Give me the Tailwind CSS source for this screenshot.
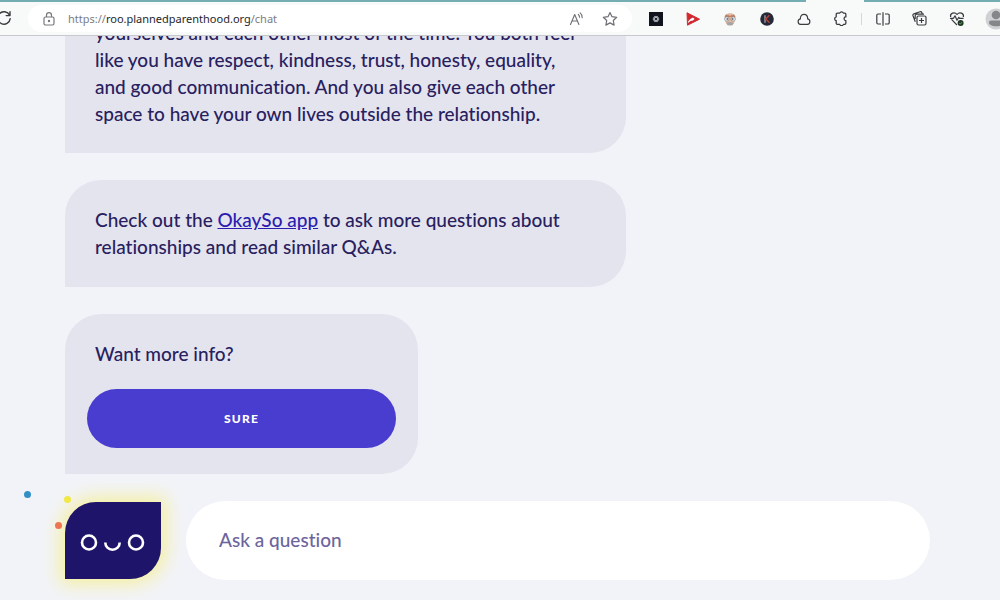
<!DOCTYPE html>
<html lang="en">
<head>
  <meta charset="UTF-8">
  <meta name="viewport" content="width=device-width, initial-scale=1">
  <title>Roo</title>
  <script src="https://cdn.jsdelivr.net/npm/@tailwindcss/browser@4"></script>
</head>
<body class="h-screen flex flex-col overflow-hidden bg-[#f2f3f8] text-[#28205f] font-['Lato',sans-serif] [font-variant-ligatures:none]">

  <!-- Browser toolbar -->
  <header class="relative z-10 h-9 shrink-0 flex items-center bg-[#f7faf9] border-b border-[#c6c8cb] text-[#3b3c40]">
    <div class="absolute inset-x-0 top-0 flex h-[2px]">
      <span class="flex-1 bg-[#74aeb3]"></span>
      <span class="w-[58px]"></span>
      <span class="w-[136px] bg-[#74aeb3]"></span>
    </div>
    <button type="button" aria-label="Refresh" class="-ml-1 w-4 shrink-0">
      <svg class="size-4" viewBox="0 0 16 16" fill="none" stroke="currentColor" stroke-width="1.4" stroke-linecap="round" stroke-linejoin="round">
        <path d="M13.6 5.2A6.2 6.2 0 1 0 14.200 8.600M14 1.800V5.600H10.200"/>
      </svg>
    </button>
    <div class="ml-4 mr-[5px] mt-[2px] flex-1 min-w-0 h-[27px] flex items-center rounded-full bg-white pl-[14px] pr-[14px]">
      <svg class="size-[14px] shrink-0 text-[#77787f]" viewBox="0 0 14 14" fill="none" stroke="currentColor" stroke-width="1.2">
        <rect x="2" y="5" width="10" height="8" rx="1.500"/>
        <path d="M4.500 5V3.200a2.500 2.500 0 0 1 5 0V5"/>
        <circle cx="7" cy="9" r=".6" fill="currentColor"/>
      </svg>
      <div role="textbox" contenteditable="true" aria-label="Address" class="ml-3 flex-1 min-w-0 whitespace-nowrap overflow-hidden text-[11px] leading-4 font-['Noto_Sans',sans-serif] text-[#7b7c82] outline-none">https://<span class="text-[#25262b]">roo.plannedparenthood.org</span>/chat</div>
      <button type="button" aria-label="Read aloud" class="text-[#6d6e74]">
        <svg class="size-4" viewBox="0 0 16 16" fill="none" stroke="currentColor" stroke-width="1.1" stroke-linecap="round" stroke-linejoin="round">
          <path d="M1.500 13.500 5.700 3.500 9.900 13.500M3 10h5.400M9.300 3.300q1.300 1.200 1.200 3M11.200 1.800q2.300 2 2 5"/>
        </svg>
      </button>
      <button type="button" aria-label="Add to favorites" class="ml-[17px] text-[#6d6e74]">
        <svg class="size-4" viewBox="0 0 16 16" fill="none" stroke="currentColor" stroke-width="1.2" stroke-linejoin="round">
          <path d="m8 1.500 2 4.200 4.700.6-3.400 3.200.8 4.600L8 11.900l-4.100 2.200.8-4.600L1.300 6.300 6 5.700z"/>
        </svg>
      </button>
    </div>

    <nav aria-label="Extensions" class="mt-[2px] flex shrink-0 items-center">
      <button type="button" aria-label="ChatGPT extension" class="w-[37px] flex justify-center">
        <svg class="size-[14px]" viewBox="0 0 14 14">
          <rect width="14" height="14" fill="#11131d"/>
          <g fill="none" stroke="#b9bbc2" stroke-width=".8">
            <ellipse cx="7" cy="7" rx="3" ry="1.500"/>
            <ellipse cx="7" cy="7" rx="3" ry="1.500" transform="rotate(60 7 7)"/>
            <ellipse cx="7" cy="7" rx="3" ry="1.500" transform="rotate(120 7 7)"/>
          </g>
        </svg>
      </button>
      <button type="button" aria-label="Video extension" class="w-[37px] flex justify-center">
        <svg class="size-[14px]" viewBox="0 0 14 14">
          <path d="M1 .8 13.500 7.200 1.500 13.200z" fill="#cf2a30" stroke="#cf2a30" stroke-linejoin="round"/>
          <path d="M1.600 11.300Q2.800 7 7 5.600L8.600 7Q7 9 4.500 8.900z" fill="#fff"/>
        </svg>
      </button>
      <button type="button" aria-label="Avatar extension" class="w-[37px] flex justify-center">
        <svg class="size-[14px]" viewBox="0 0 14 14">
          <path d="M1.500 5.500C1.500 0 12.500 0 12.500 5.500z" fill="#bf7f60"/>
          <path d="M2.500 5h9v4.500a4.500 4 0 0 1-9 0z" fill="#dfb69e"/>
          <path d="M4 2.700h6M7 1v3" stroke="#ead4c5" stroke-width=".8"/>
          <circle cx="3.800" cy="7" r="2.200" fill="#e5edf3" stroke="#8c8487" stroke-width=".7"/>
          <circle cx="10.200" cy="7" r="2.200" fill="#e5edf3" stroke="#8c8487" stroke-width=".7"/>
          <circle cx="4.300" cy="7" r=".8" fill="#34343e"/>
          <circle cx="9.700" cy="7" r=".8" fill="#34343e"/>
          <path d="M3.500 11q3.500-2 7 0l-1 2.300h-5z" fill="#a6a5a4"/>
        </svg>
      </button>
      <button type="button" aria-label="K extension" class="w-[37px] flex justify-center">
        <svg class="size-[14px]" viewBox="0 0 14 14">
          <circle cx="7" cy="7" r="6.800" fill="#242a38"/>
          <path d="M5 3.300v7.400" stroke="#a7a4a6" stroke-width="1.300"/>
          <path d="M9.400 3.300 5.700 7l3.900 3.700" fill="none" stroke="#bd3e38" stroke-width="1.400"/>
        </svg>
      </button>
      <button type="button" aria-label="Cloud extension" class="w-[37px] flex justify-center">
        <svg class="size-[14px]" viewBox="0 0 14 14" fill="none" stroke="currentColor" stroke-width="1.200">
          <path d="M3.500 12.400A2.800 2.800 0 0 1 3.300 6.900C3.300.8 10.700.8 10.700 6.900a2.800 2.800 0 0 1-.2 5.500z"/>
        </svg>
      </button>
      <button type="button" aria-label="Extensions" class="w-[37px] flex justify-center">
        <svg class="size-[15px]" viewBox="0 0 14 14" fill="none" stroke="currentColor" stroke-width="1.200" stroke-linejoin="round">
          <path d="M4 2h2.300a1.800 1.800 0 0 1 3.400 0H11a1 1 0 0 1 1 1v2.500a1.700 1.700 0 0 0 0 3.400v2.600a1 1 0 0 1-1 1H9.700a1.800 1.800 0 0 1-3.400 0H4a1 1 0 0 1-1-1V9.100a1.900 1.900 0 0 1 0-3.700V3a1 1 0 0 1 1-1z"/>
        </svg>
      </button>
      <span class="mx-[2px] h-3 w-px bg-[#d5d7da]"></span>
      <button type="button" aria-label="Split screen" class="w-[37px] flex justify-center">
        <svg class="size-[14px]" viewBox="0 0 14 14" fill="none" stroke="currentColor" stroke-width="1.200">
          <path d="M5 2H2A1.200 1.200 0 0 0 .8 3.200v7.600A1.200 1.200 0 0 0 2 12h3M9 2h3a1.200 1.200 0 0 1 1.200 1.200v7.600A1.200 1.200 0 0 1 12 12H9M7 .3v13.400"/>
        </svg>
      </button>
      <button type="button" aria-label="Collections" class="w-[37px] flex justify-center">
        <svg class="size-[15px]" viewBox="0 0 15 15" fill="none" stroke="currentColor" stroke-width="1.200" stroke-linejoin="round">
          <rect x="5" y="5" width="9" height="9" rx="1.500"/>
          <path d="M9.500 7v5M7 9.500h5M3.300 10.800 1 4.800a1.500 1.500 0 0 1 .9-1.900L8 .8a1.500 1.500 0 0 1 1.900.9l.5 1.400M12 3.100H4.800a1.600 1.600 0 0 0-1.600 1.600V8"/>
        </svg>
      </button>
      <button type="button" aria-label="Browser essentials" class="w-[37px] flex justify-center">
        <svg class="size-4" viewBox="0 0 16 16" fill="none" stroke="currentColor" stroke-width="1.200" stroke-linejoin="round">
          <path d="M8 14 2.500 8.300M1.600 6C.8 2.200 5.500.2 8 3.500 10.500.2 15.200 2.200 14.400 6M1 7.300h3.500L6 4.800l2 4.500 1.800-3 .8 1h4"/>
          <circle cx="11.600" cy="12" r="3" fill="#1f3525" stroke="none"/>
          <path d="m10.200 12 1.100 1.100 1.800-2" stroke="#69d16d" stroke-width=".8"/>
        </svg>
      </button>
      <button type="button" aria-label="Profile" class="ml-[10px] -mr-[7px]">
        <svg class="size-[22px]" viewBox="0 0 22 22">
          <circle cx="11" cy="11" r="10.500" fill="#cfd1d4"/>
          <circle cx="11" cy="7" r="4.300" fill="#858689"/>
          <path d="M4 14.500a2 2 0 0 1 2-2h10a2 2 0 0 1 2 2c0 5-14 5-14 0z" fill="#858689"/>
        </svg>
      </button>
    </nav>
  </header>

  <!-- Conversation, newest message at the bottom -->
  <main class="flex-1 min-h-0 flex flex-col justify-end items-start gap-[27px] overflow-hidden pl-[65px] pr-6 text-[19px] leading-[27px] font-medium">
    <div class="w-full max-w-[561px] shrink-0 rounded-[36px] rounded-bl-none bg-[#e4e4ee] px-[30px] py-[26px]">
      <p>yourselves and each other most of the time. You both feel<br>like you have respect, kindness, trust, honesty, equality,<br>and good communication. And you also give each other<br>space to have your own lives outside the relationship.</p>
    </div>
    <div class="w-full max-w-[561px] shrink-0 rounded-[36px] rounded-bl-none bg-[#e4e4ee] px-[30px] pt-[26px] pb-[27px]">
      <p>Check out the <a href="#" class="text-[#2b1db0] underline">OkaySo app</a> to ask more questions about<br>relationships and read similar Q&amp;As.</p>
    </div>
    <div class="w-full max-w-[353px] shrink-0 rounded-[36px] rounded-bl-none bg-[#e4e4ee] px-[22px] py-[26px]">
      <p class="px-2">Want more info?</p>
      <button type="button" class="mt-[22px] h-[59px] w-full rounded-full bg-[#493dd0] text-[12px] font-black tracking-widest text-white">SURE</button>
    </div>
  </main>

  <!-- Roo and the question box -->
  <footer class="relative shrink-0 flex items-center gap-[25px] pt-[27px] pb-5 pl-[65px] pr-[70px]">
    <span class="absolute left-[24px] top-[17px] size-[7px] rounded-full bg-[#328fc6]"></span>
    <div class="relative w-24 h-[77px] shrink-0 rounded-tl-[31px] rounded-br-[31px] bg-[#1e156b] shadow-[0_0_18px_5px_#f4efa0,0_0_0_1px_#fbf9df]">
      <span class="absolute left-[-1px] top-[-6px] size-[7px] rounded-full bg-[#efe845]"></span>
      <span class="absolute left-[-10px] top-5 size-[7px] rounded-full bg-[#ed7650]"></span>
      <svg class="w-full h-full" viewBox="0 0 96 77" fill="none" stroke="#fff" stroke-width="2.600" aria-label="Roo">
        <circle cx="24" cy="40.500" r="7"/>
        <circle cx="71" cy="40.500" r="7"/>
        <path d="M40.300 40.500a7.200 7.200 0 0 0 14.400 0"/>
      </svg>
    </div>
    <input type="text" aria-label="Ask a question" placeholder="Ask a question" class="h-[79px] flex-1 min-w-0 rounded-full bg-white px-[33px] pb-[2px] text-[19px] leading-[27px] font-medium text-[#28205f] placeholder:text-[#6c659c] outline-none">
  </footer>
</body>
</html>
